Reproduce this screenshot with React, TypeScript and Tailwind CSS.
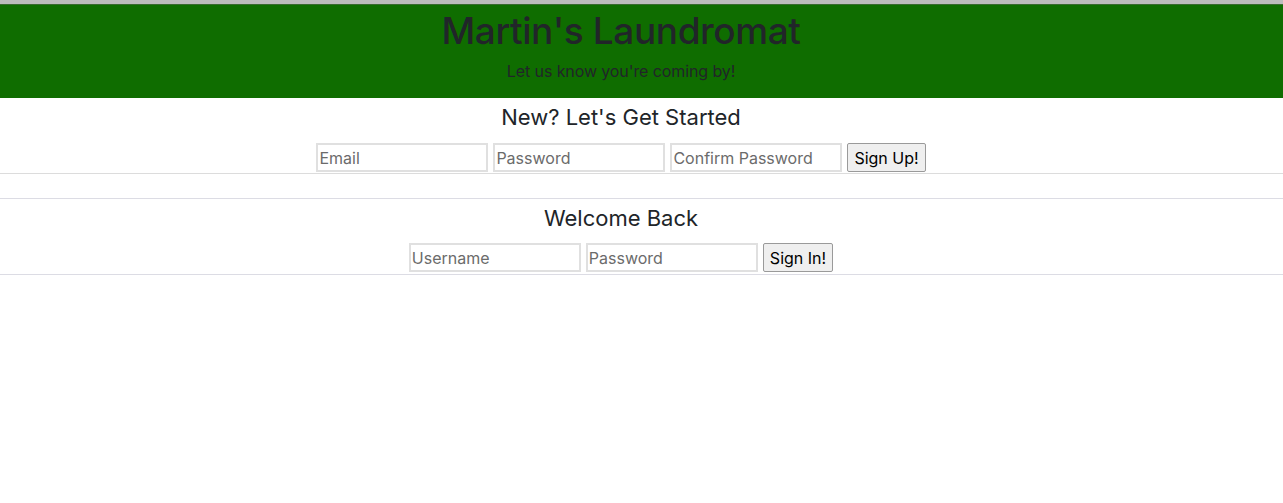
import React from 'react';

const inputCls =
    'w-[172px] h-[29px] border-2 border-[#e0e0e0] px-[1px] text-[16px] text-black placeholder:text-[#6b6b6b] outline-none bg-white';
const btnCls =
    'h-[29px] px-[6px] border border-[#9a9a9a] bg-[#efefef] text-[16px] text-black rounded-[2px]';

const App: React.FC = () => {
    return (
        <div className="min-h-[503px] bg-white text-[#212529]" style={{ fontFamily: 'Inter, "Noto Sans", sans-serif' }}>
            <div className="h-[5px] bg-[#bdbdbd] border-b border-[#3a6b30]" />
            <header className="bg-[#0f6d00] h-[93px] pr-[41px] flex flex-col items-center">
                <h1 className="text-[37px] font-medium leading-[48px] mt-[2px] tracking-[-0.4px]">Martin's Laundromat</h1>
                <p className="text-[16px] leading-[20px] mt-[6px] tracking-[-0.1px]">Let us know you're coming by!</p>
            </header>

            <section className="flex flex-col items-center pr-[41px] border-b border-[#dcdcdc] pb-[1px]">
                <h2 className="text-[22px] leading-[28px] mt-[5px]">New? Let's Get Started</h2>
                <div className="flex gap-[5px] mt-[12px]">
                    <input className={inputCls} placeholder="Email" />
                    <input className={inputCls} placeholder="Password" />
                    <input className={inputCls} placeholder="Confirm Password" />
                    <button className={btnCls}>Sign Up!</button>
                </div>
            </section>

            <div className="h-[24px]" />

            <section className="flex flex-col items-center pr-[41px] border-t border-b border-[#dcdce4] pb-[2px]">
                <h2 className="text-[22px] leading-[28px] mt-[5px]">Welcome Back</h2>
                <div className="flex gap-[5px] mt-[11px]">
                    <input className={inputCls} placeholder="Username" />
                    <input className={inputCls} placeholder="Password" />
                    <button className={btnCls}>Sign In!</button>
                </div>
            </section>
        </div>
    );
};

export default App;
